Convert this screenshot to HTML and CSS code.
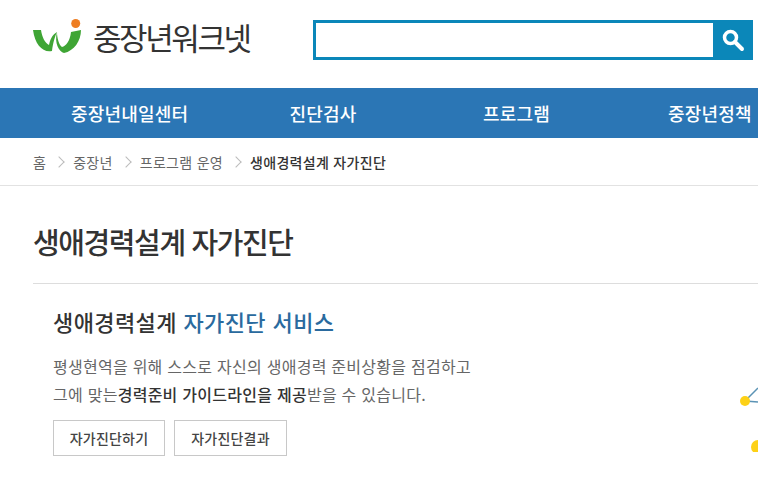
FILE: index.html
```html
<!DOCTYPE html>
<html lang="ko">
<head>
  <meta charset="UTF-8">
  <meta name="viewport" content="width=device-width, initial-scale=1.0">
  <title>생애경력설계 자가진단 - 중장년워크넷</title>
  <link rel="stylesheet" href="styles.css">
</head>
<body>
  <div class="wrapper">
    <header class="top">
      <a class="logo" href="#">
        <svg class="logo-mark" width="48" height="36" viewBox="0 0 48 36">
          <path d="M0 11 L8 11 C9 18 12 24 16 26 C17 21 19 16 24 13 C22 17 20 24 19 32 C10 34 2 26 0 11 Z" fill="#3fa535"/>
          <path d="M24 13 C24 19 26 26 29 28 C33 27 37 22 38 13 L48 11 C48 22 41 32 31 34 C26 33 21 24 24 13 Z" fill="#3fa535"/>
          <circle cx="42.700" cy="4.500" r="4.500" fill="#ee7d22"/>
        </svg>
        <span class="logo-text">중장년워크넷</span>
      </a>
      <form class="search">
        <input class="search-input" type="text">
        <button class="search-btn" type="button" aria-label="검색">
          <svg width="24" height="24" viewBox="0 0 24 24">
            <circle cx="9.500" cy="9.500" r="6" fill="none" stroke="#fff" stroke-width="3.500"/>
            <path d="M14 14 L21 21" stroke="#fff" stroke-width="4" stroke-linecap="round"/>
          </svg>
        </button>
      </form>
    </header>

    <nav class="gnb">
      <a href="#">중장년내일센터</a>
      <a href="#">진단검사</a>
      <a href="#">프로그램</a>
      <a href="#">중장년정책</a>
    </nav>

    <div class="crumbs">
      <span>홈</span><i class="sep"></i>
      <span>중장년</span><i class="sep"></i>
      <span>프로그램 운영</span><i class="sep"></i>
      <strong>생애경력설계 자가진단</strong>
    </div>

    <main class="content">
      <h1 class="page-title">생애경력설계 자가진단</h1>
      <section class="intro">
        <h2 class="intro-title">생애경력설계 <em>자가진단 서비스</em></h2>
        <p class="intro-text">평생현역을 위해 스스로 자신의 생애경력 준비상황을 점검하고<br>그에 맞는<b>경력준비 가이드라인을 제공</b>받을 수 있습니다.</p>
        <div class="btns">
          <a class="btn" href="#">자가진단하기</a>
          <a class="btn btn-wide" href="#">자가진단결과</a>
        </div>
        <svg class="deco" width="18" height="70" viewBox="0 0 18 70">
          <path d="M5 19 L18 6 M5 19 L18 20" stroke="#5b93b5" stroke-width="1.500" fill="none"/>
          <circle cx="5" cy="19" r="5" fill="#fdd117"/>
          <circle cx="18" cy="65" r="7" fill="#fdd117"/>
        </svg>
      </section>
    </main>
  </div>
</body>
</html>
```

FILE: styles.css
```css
html, body {
  margin: 0;
  padding: 0;
  height: 100%;
  overflow: hidden;
}
body {
  font-family: "Noto Sans CJK KR", "Noto Sans", sans-serif;
  background: #fff;
  color: #333;
}
a {
  color: inherit;
  text-decoration: none;
}
.wrapper {
  width: 758px;
  height: 485px;
  overflow: hidden;
}
.top {
  height: 88px;
  display: flex;
  align-items: flex-start;
  padding-left: 33px;
  box-sizing: border-box;
}
.logo {
  display: flex;
  align-items: center;
  width: 280px;
  height: 36px;
  margin-top: 19px;
}
.logo-mark {
  flex: none;
}
.logo-text {
  margin-left: 12px;
  font-size: 31px;
  line-height: 36px;
  letter-spacing: -2.400px;
  white-space: nowrap;
  color: #333;
}
.search {
  display: flex;
  width: 440px;
  height: 40px;
  margin-top: 20px;
}
.search-input {
  flex: 1;
  min-width: 0;
  box-sizing: border-box;
  border: 3px solid #0b87b9;
  border-right: none;
  outline: none;
  padding: 0 8px;
}
.search-btn {
  width: 40px;
  border: none;
  padding: 0;
  background: #0b87b9;
  display: flex;
  align-items: center;
  justify-content: center;
}
.gnb {
  height: 50px;
  background: #2b76b5;
  display: flex;
  padding-left: 33px;
}
.gnb a {
  flex: 0 0 193.400px;
  text-align: center;
  line-height: 50px;
  font-size: 18px;
  font-weight: 500;
  letter-spacing: 0.200px;
  color: #fff;
  white-space: nowrap;
}
.crumbs {
  height: 47px;
  border-bottom: 1px solid #e2e2e2;
  padding-left: 33px;
  display: flex;
  align-items: center;
  font-size: 14px;
  letter-spacing: 0.300px;
  color: #666;
}
.crumbs strong {
  font-weight: 500;
  color: #333;
}
.sep {
  width: 7px;
  height: 7px;
  margin: 0 10px 0 9px;
  border-top: 1px solid #bbb;
  border-right: 1px solid #bbb;
  transform: rotate(45deg);
}
.content {
  padding: 0 0 0 33px;
}
.page-title {
  margin: 0;
  height: 98px;
  box-sizing: border-box;
  border-bottom: 1px solid #ddd;
  font-size: 29px;
  font-weight: 500;
  line-height: 42px;
  padding-top: 34px;
  letter-spacing: -1.400px;
  color: #333;
}
.intro {
  position: relative;
  padding: 22px 0 0 20px;
}
.intro-title {
  margin: 0;
  font-size: 22px;
  line-height: 30px;
  font-weight: 500;
  letter-spacing: 0.400px;
  color: #333;
}
.intro-title em {
  font-style: normal;
  color: #2a6a9e;
}
.intro-text {
  margin: 16px 0 0;
  font-size: 16px;
  line-height: 28px;
  letter-spacing: 0.260px;
  color: #666;
}
.intro-text b {
  font-weight: 500;
  color: #333;
}
.btns {
  display: flex;
  gap: 9px;
  margin-top: 12px;
}
.btn {
  width: 112px;
  height: 36px;
  box-sizing: border-box;
  border: 1px solid #c8c8c8;
  font-size: 14px;
  font-weight: 500;
  letter-spacing: 0.200px;
  line-height: 34px;
  text-align: center;
  color: #444;
}
.btn-wide {
  width: 113px;
}
.deco {
  position: absolute;
  left: 707px;
  top: 98px;
}
```
